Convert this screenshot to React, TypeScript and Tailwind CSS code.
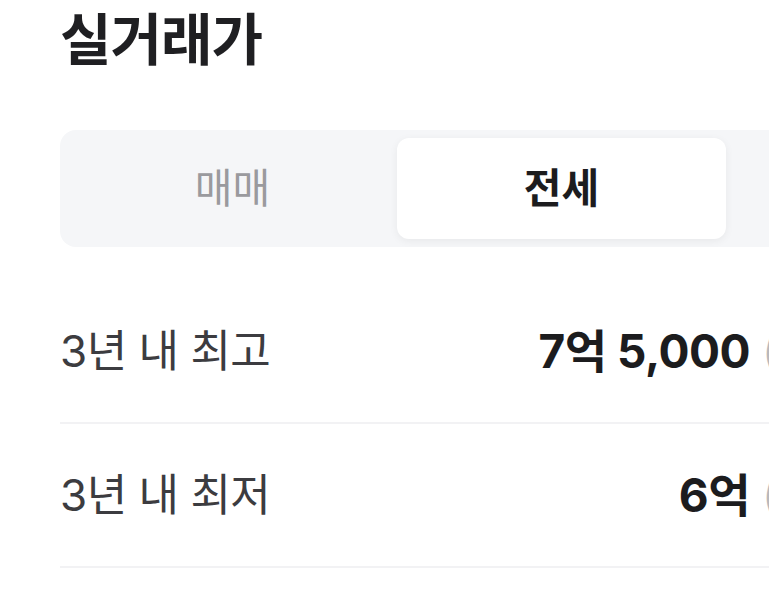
import React from "react";

const font = { fontFamily: '"Inter", "Noto Sans CJK KR", sans-serif' };

function Row({ label, value }: { label: string; value: string }) {
  return (
    <div className="flex h-[144px] items-center justify-between border-b-2 border-[#f2f2f4]">
      <span className="text-[44px] font-normal tracking-[-0.5px] text-[#3c3c40]">{label}</span>
      <div className="flex items-center">
        <span className="text-[46px] font-bold tracking-[-0.5px] text-[#1c1c1e]">{value}</span>
        <span className="ml-3 w-[301px] whitespace-nowrap text-[44px] text-[#b8b8bc]">(12층)</span>
      </div>
    </div>
  );
}

export default function App() {
  return (
    <div className="h-[600px] w-[769px] overflow-hidden bg-white" style={font}>
      <div className="w-[1003px] pl-[60px] box-content">
        <h1 className="text-[56px] font-bold leading-[80px] tracking-[-1px] text-[#1f1f22]">실거래가</h1>
        <div className="mt-[50px] flex h-[117px] rounded-[16px] bg-[#f5f6f8] p-[8px]">
          <div className="flex flex-1 items-center justify-center text-[41px] text-[#9a9a9e]">매매</div>
          <div className="flex flex-1 items-center justify-center rounded-[12px] bg-white text-[41px] font-bold text-[#1c1c1e] shadow-[0_2px_8px_rgba(0,0,0,0.06)]">
            전세
          </div>
          <div className="flex flex-1 items-center justify-center text-[41px] text-[#9a9a9e]">월세</div>
        </div>
        <div className="mt-[33px]">
          <Row label="3년 내 최고" value="7억 5,000" />
          <Row label="3년 내 최저" value="6억" />
        </div>
      </div>
    </div>
  );
}
